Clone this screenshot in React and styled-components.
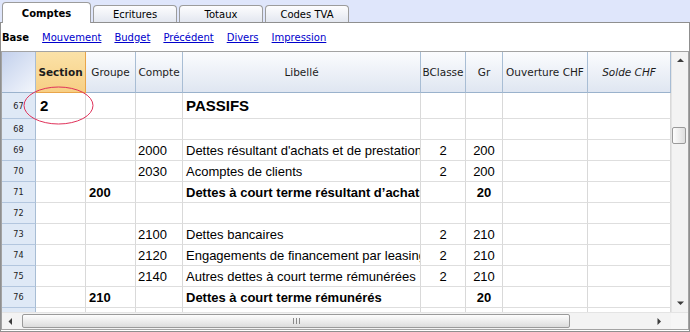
import React from 'react';
import styled, { createGlobalStyle } from 'styled-components';

const GlobalStyle = createGlobalStyle`
  html, body {
    margin: 0;
    padding: 0;
    background: #ffffff;
  }
  body {
    font-family: "DejaVu Sans", sans-serif;
  }
`;

const COLUMNS = '34px 50px 50px 47px 238px 45px 37px 85px 83px';

const Window = styled.div`
  width: 690px;
  height: 332px;
  display: flex;
  flex-direction: column;
  overflow: hidden;
  background: #dfe6fb;
`;

const TabStrip = styled.div`
  flex: none;
  height: 22px;
  display: flex;
  align-items: flex-end;
  gap: 2px;
  padding-left: 2px;
  position: relative;
  z-index: 1;
`;

const Tab = styled.div`
  box-sizing: border-box;
  width: ${(p) => (p.$active ? 89 : 84)}px;
  height: ${(p) => (p.$active ? 21 : 17)}px;
  margin-bottom: ${(p) => (p.$active ? -1 : 0)}px;
  border: 1px solid #9c9c9c;
  border-bottom: none;
  border-radius: 4px 4px 0 0;
  background: ${(p) => (p.$active ? '#ffffff' : 'linear-gradient(#fdfdfe, #e3e7f0)')};
  display: flex;
  align-items: center;
  justify-content: center;
  padding-top: ${(p) => (p.$active ? 0 : 1)}px;
  font-family: "DejaVu Sans", sans-serif;
  font-size: 10px;
  font-weight: ${(p) => (p.$active ? 'bold' : 'normal')};
  color: #000;
`;

const Panel = styled.div`
  flex: 1;
  box-sizing: border-box;
  display: flex;
  flex-direction: column;
  background: #ffffff;
  border: 1px solid #8f8f8f;
  padding-bottom: 1px;
`;

const SubNav = styled.div`
  flex: none;
  height: 28px;
  display: flex;
  align-items: center;
  gap: 13px;
  padding-left: 1px;
  font-family: "DejaVu Sans", sans-serif;
  font-size: 10px;
`;

const NavCurrent = styled.span`
  font-weight: bold;
  color: #000;
`;

const NavLink = styled.a`
  color: #0000cc;
  text-decoration: underline;
  cursor: pointer;
`;

const Table = styled.div`
  flex: none;
  box-sizing: border-box;
  height: 279px;
  border: 1px solid #a3a3a3;
  display: flex;
  flex-direction: column;
`;

const TableBody = styled.div`
  height: 260px;
  display: flex;
`;

const Grid = styled.div`
  width: 669px;
  overflow: hidden;
  background: #ffffff;
`;

const Row = styled.div`
  position: relative;
  display: grid;
  grid-template-columns: ${COLUMNS};
  height: ${(p) => p.$height}px;
`;

const HeadCell = styled.div`
  box-sizing: border-box;
  display: flex;
  align-items: center;
  justify-content: center;
  border-right: 1px solid ${(p) => (p.$section ? '#e9a54a' : '#a8bdd4')};
  border-bottom: 1px solid ${(p) => (p.$section ? '#e9a54a' : '#9ab2cc')};
  background: ${(p) =>
    p.$corner
      ? 'linear-gradient(135deg, #c3d0ec 0%, #dde5f5 55%, #f3f6fc 100%)'
      : p.$section
      ? 'linear-gradient(#fbe2a8, #f7cf84)'
      : 'linear-gradient(#fbfcfe, #dfe6f1)'};
  font-family: "DejaVu Sans", sans-serif;
  font-size: 10.5px;
  font-weight: ${(p) => (p.$bold ? 'bold' : 'normal')};
  font-style: ${(p) => (p.$italic ? 'italic' : 'normal')};
  color: #1c1c1c;
  white-space: nowrap;
  overflow: hidden;
`;

const RowNum = styled.div`
  box-sizing: border-box;
  display: flex;
  align-items: center;
  justify-content: center;
  background: #dfe9f6;
  border-right: 1px solid #a8bdd4;
  border-bottom: 1px solid #b3c6de;
  font-family: "DejaVu Sans Condensed", "DejaVu Sans", sans-serif;
  font-size: 9px;
  color: #222;
`;

const Cell = styled.div`
  box-sizing: border-box;
  display: flex;
  align-items: center;
  justify-content: ${(p) => (p.$center ? 'center' : 'flex-start')};
  padding-left: ${(p) => (p.$center ? 0 : p.$pad ?? 3)}px;
  border-right: 1px solid #d9d9d9;
  border-bottom: 1px solid #dedede;
  font-family: "Liberation Sans", Arial, sans-serif;
  font-size: ${(p) => (p.$big ? 15 : 13)}px;
  font-weight: ${(p) => (p.$bold ? 'bold' : 'normal')};
  color: #000;
  white-space: nowrap;
  overflow: hidden;
`;

const Mark = styled.svg`
  position: absolute;
  left: 21px;
  top: -7px;
  width: 71px;
  height: 39px;
  z-index: 2;
  pointer-events: none;
`;

const VScroll = styled.div`
  width: 17px;
  box-sizing: border-box;
  display: flex;
  flex-direction: column;
  background: #f3f3f3;
  border-left: 1px solid #e4e4e4;
`;

const ArrowBox = styled.div`
  flex: none;
  height: ${(p) => p.$size || 17}px;
  width: ${(p) => (p.$horizontal ? p.$size || 17 : 'auto')}px;
  display: flex;
  align-items: center;
  justify-content: center;
`;

const Track = styled.div`
  flex: 1;
  display: flex;
  flex-direction: ${(p) => (p.$horizontal ? 'row' : 'column')};
`;

const VThumb = styled.div`
  margin-top: 58px;
  width: 14px;
  height: 17px;
  box-sizing: border-box;
  border: 1px solid #9a9a9a;
  border-radius: 2px;
  background: linear-gradient(90deg, #fdfdfd, #dedede);
`;

const HBar = styled.div`
  height: 17px;
  display: flex;
  background: #f3f3f3;
  border-top: 1px solid #e4e4e4;
  box-sizing: border-box;
`;

const HScroll = styled.div`
  width: 669px;
  display: flex;
  align-items: center;
`;

const HThumb = styled.div`
  width: 548px;
  height: 14px;
  margin-left: 3px;
  box-sizing: border-box;
  border: 1px solid #9a9a9a;
  border-radius: 2px;
  background: linear-gradient(#fdfdfd, #dcdcdc);
  display: flex;
  align-items: center;
  justify-content: center;
`;

const Corner = styled.div`
  width: 17px;
  background: #f6f6f6;
`;

const Arrow = ({ dir }) => {
  const pts = {
    up: '0,4 3.5,0.5 7,4',
    down: '0,0.5 3.5,4 7,0.5',
    left: '4,0 0.5,3.5 4,7',
    right: '0.5,0 4,3.5 0.5,7',
  }[dir];
  const vertical = dir === 'up' || dir === 'down';
  return (
    <svg width={vertical ? 7 : 5} height={vertical ? 5 : 7} viewBox={vertical ? '0 0 7 5' : '0 0 5 7'}>
      <polygon points={pts} fill="#3c3c3c" />
    </svg>
  );
};

const Grip = () => (
  <svg width="7" height="6" viewBox="0 0 7 6">
    <rect x="0" y="0" width="1" height="6" fill="#8a8a8a" />
    <rect x="3" y="0" width="1" height="6" fill="#8a8a8a" />
    <rect x="6" y="0" width="1" height="6" fill="#8a8a8a" />
  </svg>
);

const rows = [
  { n: 67, section: '2', libelle: 'PASSIFS', big: true },
  { n: 68 },
  { n: 69, compte: '2000', libelle: "Dettes résultant d'achats et de prestations", bclasse: '2', gr: '200' },
  { n: 70, compte: '2030', libelle: 'Acomptes de clients', bclasse: '2', gr: '200' },
  { n: 71, groupe: '200', libelle: 'Dettes à court terme résultant d’achats et de prestations', gr: '20', bold: true },
  { n: 72 },
  { n: 73, compte: '2100', libelle: 'Dettes bancaires', bclasse: '2', gr: '210' },
  { n: 74, compte: '2120', libelle: 'Engagements de financement par leasing', bclasse: '2', gr: '210' },
  { n: 75, compte: '2140', libelle: 'Autres dettes à court terme rémunérées', bclasse: '2', gr: '210' },
  { n: 76, groupe: '210', libelle: 'Dettes à court terme rémunérés', gr: '20', bold: true },
  { n: 77 },
];

const App = () => (
  <>
    <GlobalStyle />
    <Window>
      <TabStrip>
        <Tab $active>Comptes</Tab>
        <Tab>Ecritures</Tab>
        <Tab>Totaux</Tab>
        <Tab>Codes TVA</Tab>
      </TabStrip>
      <Panel>
        <SubNav>
          <NavCurrent>Base</NavCurrent>
          <NavLink>Mouvement</NavLink>
          <NavLink>Budget</NavLink>
          <NavLink>Précédent</NavLink>
          <NavLink>Divers</NavLink>
          <NavLink>Impression</NavLink>
        </SubNav>
        <Table>
          <TableBody>
            <Grid>
              <Row $height={41}>
                <HeadCell $corner />
                <HeadCell $section $bold>Section</HeadCell>
                <HeadCell>Groupe</HeadCell>
                <HeadCell>Compte</HeadCell>
                <HeadCell>Libellé</HeadCell>
                <HeadCell>BClasse</HeadCell>
                <HeadCell>Gr</HeadCell>
                <HeadCell>Ouverture CHF</HeadCell>
                <HeadCell $italic>Solde CHF</HeadCell>
              </Row>
              {rows.map((r) => (
                <Row key={r.n} $height={r.big ? 26 : 21}>
                  <RowNum>{r.n}</RowNum>
                  <Cell $big={r.big} $bold $pad={4}>{r.section}</Cell>
                  <Cell $bold>{r.groupe}</Cell>
                  <Cell $pad={2}>{r.compte}</Cell>
                  <Cell $big={r.big} $bold={r.big || r.bold}>{r.libelle}</Cell>
                  <Cell $center>{r.bclasse}</Cell>
                  <Cell $center $bold={r.bold}>{r.gr}</Cell>
                  <Cell />
                  <Cell />
                  {r.big && (
                    <Mark viewBox="0 0 71 39">
                      <ellipse cx="35.5" cy="19.5" rx="34.5" ry="18.5" fill="none" stroke="#e0325a" strokeWidth="1" />
                    </Mark>
                  )}
                </Row>
              ))}
            </Grid>
            <VScroll>
              <ArrowBox><Arrow dir="up" /></ArrowBox>
              <Track>
                <VThumb />
              </Track>
              <ArrowBox><Arrow dir="down" /></ArrowBox>
            </VScroll>
          </TableBody>
          <HBar>
            <HScroll>
              <ArrowBox $horizontal><Arrow dir="left" /></ArrowBox>
              <Track $horizontal>
                <HThumb><Grip /></HThumb>
              </Track>
              <ArrowBox $horizontal $size={24}><Arrow dir="right" /></ArrowBox>
            </HScroll>
            <Corner />
          </HBar>
        </Table>
      </Panel>
    </Window>
  </>
);

export default App;
